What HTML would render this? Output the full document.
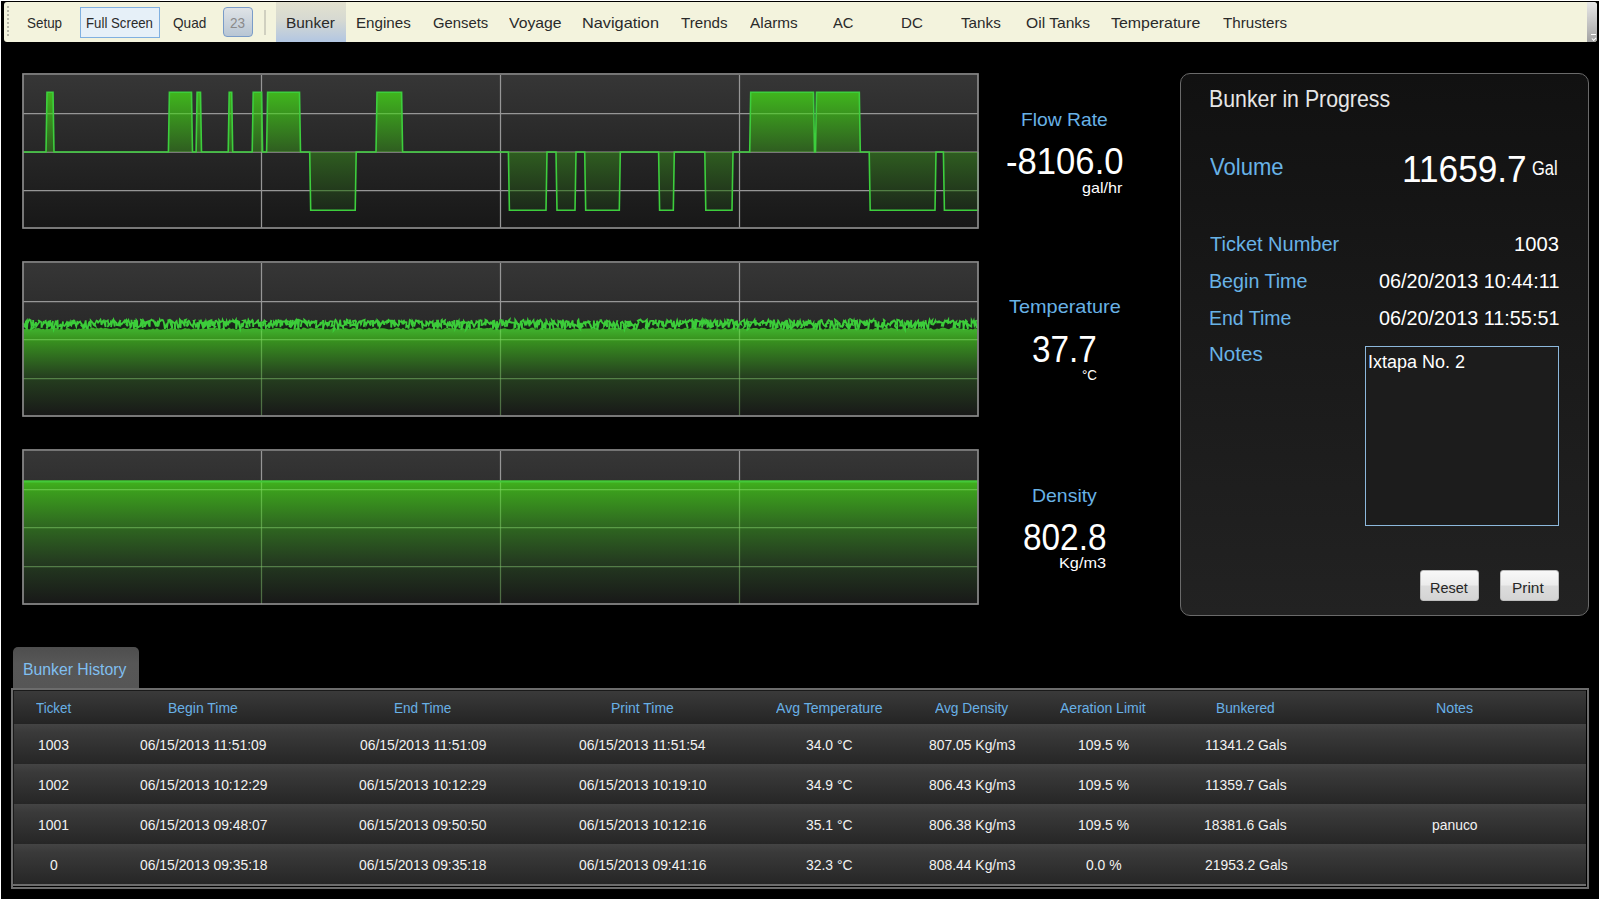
<!DOCTYPE html>
<html><head><meta charset="utf-8"><style>
*{margin:0;padding:0;box-sizing:border-box}
html,body{width:1600px;height:900px;overflow:hidden;background:#000;font-family:"Liberation Sans",sans-serif}
.t{position:absolute;white-space:nowrap;line-height:0;transform-origin:0 0}
.abs{position:absolute}
#frame{position:absolute;left:0;top:0;width:1600px;height:900px;border:1px solid #fff;border-right-color:#fff}
#tb{position:absolute;left:4px;top:2px;width:1593px;height:40px;background:#f3f3dd;border-radius:3px}
#grip{position:absolute;left:3px;top:4px;width:2px;height:30px;background:repeating-linear-gradient(#b8b8a8 0 2px,transparent 2px 4px)}
#tbend{position:absolute;left:1587px;top:2px;width:10px;height:40px;background:linear-gradient(#e8e8e8,#b8b8b8 70%,#a0a0a0);border-radius:0 4px 4px 0}
#fs{position:absolute;left:80px;top:7px;width:80px;height:31px;background:#e6f0f8;border:1px solid #80b0e0}
#n23{position:absolute;left:223px;top:7px;width:30px;height:30px;background:linear-gradient(#dfe3e6,#b8c6d4);border:1px solid #7a9cc8;border-radius:4px}
#sep{position:absolute;left:264px;top:10px;width:2px;height:25px;background:#d0d0c0}
#bunk{position:absolute;left:276px;top:2px;width:70px;height:40px;background:linear-gradient(#e2e1cf 0%,#d6d9d2 45%,#b2c6e2 100%)}
#panel{position:absolute;left:1179.5px;top:73px;width:409px;height:543px;border:1.7px solid #6a6a6a;border-radius:10px;background:linear-gradient(#111,#222)}
#notes{position:absolute;left:1365px;top:346px;width:194px;height:180px;border:1px solid #8cb8dc;background:#1c1c1c}
.btn{position:absolute;top:570px;width:58.5px;height:31px;background:linear-gradient(#f8f8f8,#ececec 48%,#dcdcdc 52%,#d4d4d4);border-radius:3px;border:1px solid #bdbdbd}
#tab{position:absolute;left:13px;top:647px;width:126px;height:42px;background:linear-gradient(#4e4e4e,#575757 40%,#565656);border-radius:5px 5px 0 0}
#tbl{position:absolute;left:11px;top:688px;width:1578px;height:201px;border:2px solid #6c6c6c;background:#000}
#tbli{position:absolute;left:13px;top:690px;width:1573px;height:196px;background:#1a1a1a}
#hdr{position:absolute;left:14px;top:691px;width:1572px;height:33px;background:linear-gradient(#3a3a3a,#242424)}
#tblb{position:absolute;left:13px;top:884px;width:1573px;height:2px;background:#6c6c6c}
.row{position:absolute;left:14px;width:1572px;height:40px;background:linear-gradient(#444 0,#3a3a3a 8px,#262626 100%)}
</style></head><body>
<div id="tb"><div id="grip"></div></div>
<div id="tbend"><div style="position:absolute;left:4px;top:32px;width:5px;height:1px;background:#fff"></div><div style="position:absolute;left:5px;top:35px;width:4px;height:3px;border-left:1.5px solid #fff;border-bottom:1.5px solid #fff;transform:rotate(-45deg)"></div></div>
<div id="fs"></div>
<div id="n23"></div>
<div id="sep"></div>
<div id="bunk"></div>
<svg width="1600" height="900" style="position:absolute;left:0;top:0">
<defs>
<linearGradient id="bg" x1="0" y1="0" x2="0" y2="1"><stop offset="0" stop-color="#363636"/><stop offset="1" stop-color="#171717"/></linearGradient>
<linearGradient id="f1" gradientUnits="userSpaceOnUse" x1="0" y1="92" x2="0" y2="228"><stop offset="0" stop-color="#42cc1a"/><stop offset="0.44" stop-color="#30661f"/><stop offset="0.87" stop-color="#1c2a1a"/><stop offset="1" stop-color="#181a18"/></linearGradient>
<linearGradient id="f2" gradientUnits="userSpaceOnUse" x1="0" y1="319" x2="0" y2="416"><stop offset="0" stop-color="#46d034"/><stop offset="0.12" stop-color="#42c22c"/><stop offset="0.2" stop-color="#3ca81e"/><stop offset="0.6" stop-color="#26441f"/><stop offset="1" stop-color="#181818"/></linearGradient>
<linearGradient id="f3" gradientUnits="userSpaceOnUse" x1="0" y1="481" x2="0" y2="604"><stop offset="0" stop-color="#44c81a"/><stop offset="0.065" stop-color="#3eb41a"/><stop offset="0.37" stop-color="#30721f"/><stop offset="0.68" stop-color="#243c20"/><stop offset="1" stop-color="#181818"/></linearGradient>
</defs>
<rect x="23" y="75" width="955" height="154" fill="url(#bg)"/><rect x="23" y="263" width="955" height="154" fill="url(#bg)"/><rect x="23" y="451" width="955" height="154" fill="url(#bg)"/><g stroke="#969696" stroke-width="1.25"><line x1="23" y1="113.5" x2="978" y2="113.5"/><line x1="23" y1="152.0" x2="978" y2="152.0"/><line x1="23" y1="190.5" x2="978" y2="190.5"/><line x1="261.5" y1="75" x2="261.5" y2="228"/><line x1="500.5" y1="75" x2="500.5" y2="228"/><line x1="739.5" y1="75" x2="739.5" y2="228"/><line x1="23" y1="301.5" x2="978" y2="301.5"/><line x1="23" y1="339.5" x2="978" y2="339.5"/><line x1="23" y1="378.5" x2="978" y2="378.5"/><line x1="261.5" y1="263" x2="261.5" y2="416"/><line x1="500.5" y1="263" x2="500.5" y2="416"/><line x1="739.5" y1="263" x2="739.5" y2="416"/><line x1="23" y1="489.5" x2="978" y2="489.5"/><line x1="23" y1="527.5" x2="978" y2="527.5"/><line x1="23" y1="566.5" x2="978" y2="566.5"/><line x1="261.5" y1="451" x2="261.5" y2="604"/><line x1="500.5" y1="451" x2="500.5" y2="604"/><line x1="739.5" y1="451" x2="739.5" y2="604"/></g><g fill-opacity="0.86"><path d="M23.0,152.0 L46.0,152.0 L47.0,92.3 L53.0,92.3 L54.0,152.0 L168.4,152.0 L169.4,92.3 L191.5,92.3 L192.5,152.0 L196.1,152.0 L197.1,92.3 L200.5,92.3 L201.5,152.0 L228.2,152.0 L229.2,92.3 L231.7,92.3 L232.7,152.0 L252.2,152.0 L253.2,92.3 L261.6,92.3 L262.6,152.0 L266.6,152.0 L267.6,92.3 L299.5,92.3 L300.5,152.0 L309.7,152.0 L310.7,210.3 L355.2,210.3 L356.2,152.0 L376.0,152.0 L377.0,92.3 L401.6,92.3 L402.6,152.0 L508.4,152.0 L509.4,210.3 L546.0,210.3 L547.0,152.0 L556.0,152.0 L557.0,210.3 L575.0,210.3 L576.0,152.0 L584.7,152.0 L585.7,210.3 L619.3,210.3 L620.3,152.0 L658.6,152.0 L659.6,210.3 L673.3,210.3 L674.3,152.0 L704.8,152.0 L705.8,210.3 L732.0,210.3 L733.0,152.0 L749.7,152.0 L750.7,92.3 L813.5,92.3 L814.5,152.0 L815.5,152.0 L816.5,92.3 L859.3,92.3 L860.3,152.0 L869.2,152.0 L870.2,210.3 L935.0,210.3 L936.0,152.0 L943.4,152.0 L944.4,210.3 L978.0,210.3 L978.0,152.0 L978.0,152.0 Z" fill="url(#f1)"/><rect x="23" y="321.5" width="955" height="9" fill="#0c200c" fill-opacity="0.5"/><path d="M23.0,328.7 L25.0,329.2 L27.0,328.3 L29.0,329.5 L31.0,328.6 L33.0,329.6 L35.0,328.2 L37.0,328.2 L39.0,327.9 L41.0,329.2 L43.0,328.8 L45.0,329.6 L47.0,328.6 L49.0,329.2 L51.0,327.9 L53.0,329.5 L55.0,327.7 L57.0,327.9 L59.0,329.7 L61.0,327.7 L63.0,329.6 L65.0,329.7 L67.0,327.6 L69.0,328.4 L71.0,329.2 L73.0,329.6 L75.0,328.7 L77.0,329.5 L79.0,328.4 L81.0,329.1 L83.0,327.7 L85.0,328.9 L87.0,328.0 L89.0,329.1 L91.0,328.1 L93.0,327.6 L95.0,328.5 L97.0,328.0 L99.0,328.6 L101.0,327.5 L103.0,328.5 L105.0,328.0 L107.0,328.3 L109.0,328.8 L111.0,329.1 L113.0,328.6 L115.0,328.4 L117.0,328.1 L119.0,328.8 L121.0,329.1 L123.0,328.0 L125.0,327.8 L127.0,329.0 L129.0,328.1 L131.0,329.2 L133.0,328.7 L135.0,327.7 L137.0,328.3 L139.0,329.6 L141.0,329.3 L143.0,328.9 L145.0,329.7 L147.0,329.7 L149.0,329.2 L151.0,329.4 L153.0,328.6 L155.0,329.5 L157.0,328.1 L159.0,329.6 L161.0,329.7 L163.0,329.3 L165.0,329.6 L167.0,329.0 L169.0,329.0 L171.0,327.7 L173.0,329.1 L175.0,327.7 L177.0,329.5 L179.0,329.3 L181.0,329.4 L183.0,329.1 L185.0,328.1 L187.0,328.8 L189.0,328.6 L191.0,329.4 L193.0,328.8 L195.0,328.4 L197.0,329.1 L199.0,329.2 L201.0,328.9 L203.0,328.3 L205.0,329.0 L207.0,328.8 L209.0,327.7 L211.0,328.1 L213.0,327.8 L215.0,328.6 L217.0,327.7 L219.0,329.2 L221.0,328.8 L223.0,327.8 L225.0,329.0 L227.0,329.2 L229.0,327.6 L231.0,329.1 L233.0,328.5 L235.0,329.5 L237.0,329.5 L239.0,328.9 L241.0,329.3 L243.0,327.9 L245.0,329.1 L247.0,329.0 L249.0,329.1 L251.0,328.5 L253.0,328.0 L255.0,328.3 L257.0,327.9 L259.0,329.0 L261.0,329.0 L263.0,328.9 L265.0,329.2 L267.0,328.1 L269.0,328.8 L271.0,329.3 L273.0,328.9 L275.0,327.9 L277.0,328.1 L279.0,328.2 L281.0,328.2 L283.0,329.0 L285.0,328.3 L287.0,328.0 L289.0,329.6 L291.0,328.8 L293.0,329.5 L295.0,328.4 L297.0,327.8 L299.0,327.7 L301.0,329.5 L303.0,327.6 L305.0,327.7 L307.0,328.8 L309.0,328.4 L311.0,327.6 L313.0,328.2 L315.0,328.8 L317.0,327.9 L319.0,328.3 L321.0,328.0 L323.0,328.6 L325.0,329.5 L327.0,328.8 L329.0,329.2 L331.0,329.3 L333.0,327.5 L335.0,327.7 L337.0,329.3 L339.0,328.6 L341.0,328.4 L343.0,329.4 L345.0,328.1 L347.0,328.6 L349.0,329.3 L351.0,329.1 L353.0,327.6 L355.0,328.1 L357.0,329.4 L359.0,328.8 L361.0,328.4 L363.0,329.5 L365.0,328.7 L367.0,329.4 L369.0,328.1 L371.0,328.9 L373.0,328.3 L375.0,327.5 L377.0,328.9 L379.0,328.6 L381.0,328.2 L383.0,328.2 L385.0,328.4 L387.0,328.9 L389.0,329.6 L391.0,329.1 L393.0,329.6 L395.0,328.2 L397.0,327.6 L399.0,327.8 L401.0,329.3 L403.0,327.7 L405.0,329.2 L407.0,329.7 L409.0,329.2 L411.0,328.6 L413.0,327.9 L415.0,329.3 L417.0,327.9 L419.0,327.5 L421.0,328.6 L423.0,329.5 L425.0,329.7 L427.0,328.6 L429.0,327.6 L431.0,328.5 L433.0,328.5 L435.0,328.9 L437.0,328.3 L439.0,328.4 L441.0,329.4 L443.0,329.3 L445.0,328.1 L447.0,328.7 L449.0,327.6 L451.0,328.6 L453.0,327.5 L455.0,328.9 L457.0,328.4 L459.0,329.6 L461.0,328.6 L463.0,327.9 L465.0,329.2 L467.0,328.4 L469.0,328.7 L471.0,329.1 L473.0,328.4 L475.0,328.7 L477.0,327.6 L479.0,328.2 L481.0,327.7 L483.0,328.6 L485.0,328.6 L487.0,328.0 L489.0,328.3 L491.0,327.5 L493.0,329.6 L495.0,329.4 L497.0,328.2 L499.0,329.7 L501.0,329.1 L503.0,328.6 L505.0,328.2 L507.0,329.0 L509.0,329.3 L511.0,329.2 L513.0,328.5 L515.0,329.4 L517.0,328.0 L519.0,329.2 L521.0,329.7 L523.0,327.6 L525.0,327.9 L527.0,329.0 L529.0,329.0 L531.0,327.8 L533.0,327.5 L535.0,329.5 L537.0,329.7 L539.0,329.5 L541.0,327.6 L543.0,329.1 L545.0,328.5 L547.0,328.3 L549.0,328.2 L551.0,329.1 L553.0,328.4 L555.0,327.9 L557.0,327.6 L559.0,327.6 L561.0,328.4 L563.0,329.1 L565.0,328.8 L567.0,329.6 L569.0,329.4 L571.0,329.5 L573.0,328.7 L575.0,328.6 L577.0,329.0 L579.0,328.9 L581.0,327.9 L583.0,328.7 L585.0,328.5 L587.0,328.6 L589.0,328.6 L591.0,328.6 L593.0,328.8 L595.0,328.2 L597.0,327.8 L599.0,329.7 L601.0,329.2 L603.0,328.1 L605.0,329.3 L607.0,329.2 L609.0,328.2 L611.0,328.1 L613.0,327.9 L615.0,327.5 L617.0,328.0 L619.0,329.5 L621.0,329.6 L623.0,328.9 L625.0,329.6 L627.0,327.6 L629.0,328.7 L631.0,329.6 L633.0,328.1 L635.0,327.6 L637.0,329.6 L639.0,328.8 L641.0,329.6 L643.0,327.7 L645.0,329.3 L647.0,328.8 L649.0,329.4 L651.0,328.2 L653.0,327.6 L655.0,328.9 L657.0,328.3 L659.0,327.8 L661.0,327.8 L663.0,327.7 L665.0,328.8 L667.0,329.2 L669.0,327.7 L671.0,327.9 L673.0,329.3 L675.0,328.0 L677.0,328.8 L679.0,327.9 L681.0,329.3 L683.0,328.8 L685.0,327.7 L687.0,328.2 L689.0,329.0 L691.0,328.0 L693.0,327.8 L695.0,328.4 L697.0,327.5 L699.0,327.6 L701.0,327.8 L703.0,328.2 L705.0,329.3 L707.0,329.5 L709.0,328.4 L711.0,329.1 L713.0,329.3 L715.0,329.6 L717.0,328.0 L719.0,329.0 L721.0,329.5 L723.0,329.1 L725.0,327.6 L727.0,329.3 L729.0,329.2 L731.0,328.8 L733.0,327.6 L735.0,327.7 L737.0,327.5 L739.0,328.7 L741.0,328.8 L743.0,327.7 L745.0,329.3 L747.0,328.4 L749.0,327.8 L751.0,328.8 L753.0,328.1 L755.0,328.0 L757.0,328.0 L759.0,329.2 L761.0,327.7 L763.0,328.0 L765.0,327.8 L767.0,329.0 L769.0,329.0 L771.0,328.4 L773.0,327.8 L775.0,327.5 L777.0,329.5 L779.0,328.8 L781.0,327.6 L783.0,328.9 L785.0,329.3 L787.0,327.9 L789.0,329.6 L791.0,327.9 L793.0,328.5 L795.0,328.5 L797.0,329.6 L799.0,328.6 L801.0,329.1 L803.0,329.1 L805.0,328.1 L807.0,328.5 L809.0,328.5 L811.0,328.2 L813.0,327.9 L815.0,327.9 L817.0,329.7 L819.0,329.5 L821.0,327.9 L823.0,329.7 L825.0,328.2 L827.0,329.2 L829.0,328.5 L831.0,328.5 L833.0,328.4 L835.0,327.6 L837.0,328.6 L839.0,328.1 L841.0,329.5 L843.0,328.9 L845.0,328.1 L847.0,329.3 L849.0,328.8 L851.0,328.9 L853.0,329.1 L855.0,329.1 L857.0,328.0 L859.0,329.4 L861.0,329.1 L863.0,329.2 L865.0,329.1 L867.0,328.0 L869.0,329.7 L871.0,329.1 L873.0,329.5 L875.0,328.1 L877.0,328.2 L879.0,329.4 L881.0,329.7 L883.0,329.0 L885.0,327.8 L887.0,328.1 L889.0,328.7 L891.0,327.5 L893.0,328.2 L895.0,328.7 L897.0,329.5 L899.0,329.0 L901.0,329.5 L903.0,328.0 L905.0,329.4 L907.0,328.0 L909.0,328.1 L911.0,328.9 L913.0,328.0 L915.0,327.5 L917.0,329.0 L919.0,327.6 L921.0,328.9 L923.0,327.7 L925.0,328.6 L927.0,329.5 L929.0,328.4 L931.0,327.9 L933.0,329.5 L935.0,329.5 L937.0,328.5 L939.0,329.1 L941.0,328.0 L943.0,327.5 L945.0,328.0 L947.0,328.8 L949.0,329.2 L951.0,327.8 L953.0,327.8 L955.0,328.2 L957.0,328.1 L959.0,328.3 L961.0,329.1 L963.0,328.3 L965.0,329.1 L967.0,328.9 L969.0,329.5 L971.0,328.8 L973.0,329.6 L975.0,328.3 L977.0,328.7 L978,417 L23,417 Z" fill="url(#f2)"/><rect x="23" y="480.5" width="955" height="122.5" fill="url(#f3)"/></g><clipPath id="fc"><path d="M23.0,152.0 L46.0,152.0 L47.0,92.3 L53.0,92.3 L54.0,152.0 L168.4,152.0 L169.4,92.3 L191.5,92.3 L192.5,152.0 L196.1,152.0 L197.1,92.3 L200.5,92.3 L201.5,152.0 L228.2,152.0 L229.2,92.3 L231.7,92.3 L232.7,152.0 L252.2,152.0 L253.2,92.3 L261.6,92.3 L262.6,152.0 L266.6,152.0 L267.6,92.3 L299.5,92.3 L300.5,152.0 L309.7,152.0 L310.7,210.3 L355.2,210.3 L356.2,152.0 L376.0,152.0 L377.0,92.3 L401.6,92.3 L402.6,152.0 L508.4,152.0 L509.4,210.3 L546.0,210.3 L547.0,152.0 L556.0,152.0 L557.0,210.3 L575.0,210.3 L576.0,152.0 L584.7,152.0 L585.7,210.3 L619.3,210.3 L620.3,152.0 L658.6,152.0 L659.6,210.3 L673.3,210.3 L674.3,152.0 L704.8,152.0 L705.8,210.3 L732.0,210.3 L733.0,152.0 L749.7,152.0 L750.7,92.3 L813.5,92.3 L814.5,152.0 L815.5,152.0 L816.5,92.3 L859.3,92.3 L860.3,152.0 L869.2,152.0 L870.2,210.3 L935.0,210.3 L936.0,152.0 L943.4,152.0 L944.4,210.3 L978.0,210.3 L978.0,152.0 L978.0,152.0 Z"/><path d="M23.0,328.7 L25.0,329.2 L27.0,328.3 L29.0,329.5 L31.0,328.6 L33.0,329.6 L35.0,328.2 L37.0,328.2 L39.0,327.9 L41.0,329.2 L43.0,328.8 L45.0,329.6 L47.0,328.6 L49.0,329.2 L51.0,327.9 L53.0,329.5 L55.0,327.7 L57.0,327.9 L59.0,329.7 L61.0,327.7 L63.0,329.6 L65.0,329.7 L67.0,327.6 L69.0,328.4 L71.0,329.2 L73.0,329.6 L75.0,328.7 L77.0,329.5 L79.0,328.4 L81.0,329.1 L83.0,327.7 L85.0,328.9 L87.0,328.0 L89.0,329.1 L91.0,328.1 L93.0,327.6 L95.0,328.5 L97.0,328.0 L99.0,328.6 L101.0,327.5 L103.0,328.5 L105.0,328.0 L107.0,328.3 L109.0,328.8 L111.0,329.1 L113.0,328.6 L115.0,328.4 L117.0,328.1 L119.0,328.8 L121.0,329.1 L123.0,328.0 L125.0,327.8 L127.0,329.0 L129.0,328.1 L131.0,329.2 L133.0,328.7 L135.0,327.7 L137.0,328.3 L139.0,329.6 L141.0,329.3 L143.0,328.9 L145.0,329.7 L147.0,329.7 L149.0,329.2 L151.0,329.4 L153.0,328.6 L155.0,329.5 L157.0,328.1 L159.0,329.6 L161.0,329.7 L163.0,329.3 L165.0,329.6 L167.0,329.0 L169.0,329.0 L171.0,327.7 L173.0,329.1 L175.0,327.7 L177.0,329.5 L179.0,329.3 L181.0,329.4 L183.0,329.1 L185.0,328.1 L187.0,328.8 L189.0,328.6 L191.0,329.4 L193.0,328.8 L195.0,328.4 L197.0,329.1 L199.0,329.2 L201.0,328.9 L203.0,328.3 L205.0,329.0 L207.0,328.8 L209.0,327.7 L211.0,328.1 L213.0,327.8 L215.0,328.6 L217.0,327.7 L219.0,329.2 L221.0,328.8 L223.0,327.8 L225.0,329.0 L227.0,329.2 L229.0,327.6 L231.0,329.1 L233.0,328.5 L235.0,329.5 L237.0,329.5 L239.0,328.9 L241.0,329.3 L243.0,327.9 L245.0,329.1 L247.0,329.0 L249.0,329.1 L251.0,328.5 L253.0,328.0 L255.0,328.3 L257.0,327.9 L259.0,329.0 L261.0,329.0 L263.0,328.9 L265.0,329.2 L267.0,328.1 L269.0,328.8 L271.0,329.3 L273.0,328.9 L275.0,327.9 L277.0,328.1 L279.0,328.2 L281.0,328.2 L283.0,329.0 L285.0,328.3 L287.0,328.0 L289.0,329.6 L291.0,328.8 L293.0,329.5 L295.0,328.4 L297.0,327.8 L299.0,327.7 L301.0,329.5 L303.0,327.6 L305.0,327.7 L307.0,328.8 L309.0,328.4 L311.0,327.6 L313.0,328.2 L315.0,328.8 L317.0,327.9 L319.0,328.3 L321.0,328.0 L323.0,328.6 L325.0,329.5 L327.0,328.8 L329.0,329.2 L331.0,329.3 L333.0,327.5 L335.0,327.7 L337.0,329.3 L339.0,328.6 L341.0,328.4 L343.0,329.4 L345.0,328.1 L347.0,328.6 L349.0,329.3 L351.0,329.1 L353.0,327.6 L355.0,328.1 L357.0,329.4 L359.0,328.8 L361.0,328.4 L363.0,329.5 L365.0,328.7 L367.0,329.4 L369.0,328.1 L371.0,328.9 L373.0,328.3 L375.0,327.5 L377.0,328.9 L379.0,328.6 L381.0,328.2 L383.0,328.2 L385.0,328.4 L387.0,328.9 L389.0,329.6 L391.0,329.1 L393.0,329.6 L395.0,328.2 L397.0,327.6 L399.0,327.8 L401.0,329.3 L403.0,327.7 L405.0,329.2 L407.0,329.7 L409.0,329.2 L411.0,328.6 L413.0,327.9 L415.0,329.3 L417.0,327.9 L419.0,327.5 L421.0,328.6 L423.0,329.5 L425.0,329.7 L427.0,328.6 L429.0,327.6 L431.0,328.5 L433.0,328.5 L435.0,328.9 L437.0,328.3 L439.0,328.4 L441.0,329.4 L443.0,329.3 L445.0,328.1 L447.0,328.7 L449.0,327.6 L451.0,328.6 L453.0,327.5 L455.0,328.9 L457.0,328.4 L459.0,329.6 L461.0,328.6 L463.0,327.9 L465.0,329.2 L467.0,328.4 L469.0,328.7 L471.0,329.1 L473.0,328.4 L475.0,328.7 L477.0,327.6 L479.0,328.2 L481.0,327.7 L483.0,328.6 L485.0,328.6 L487.0,328.0 L489.0,328.3 L491.0,327.5 L493.0,329.6 L495.0,329.4 L497.0,328.2 L499.0,329.7 L501.0,329.1 L503.0,328.6 L505.0,328.2 L507.0,329.0 L509.0,329.3 L511.0,329.2 L513.0,328.5 L515.0,329.4 L517.0,328.0 L519.0,329.2 L521.0,329.7 L523.0,327.6 L525.0,327.9 L527.0,329.0 L529.0,329.0 L531.0,327.8 L533.0,327.5 L535.0,329.5 L537.0,329.7 L539.0,329.5 L541.0,327.6 L543.0,329.1 L545.0,328.5 L547.0,328.3 L549.0,328.2 L551.0,329.1 L553.0,328.4 L555.0,327.9 L557.0,327.6 L559.0,327.6 L561.0,328.4 L563.0,329.1 L565.0,328.8 L567.0,329.6 L569.0,329.4 L571.0,329.5 L573.0,328.7 L575.0,328.6 L577.0,329.0 L579.0,328.9 L581.0,327.9 L583.0,328.7 L585.0,328.5 L587.0,328.6 L589.0,328.6 L591.0,328.6 L593.0,328.8 L595.0,328.2 L597.0,327.8 L599.0,329.7 L601.0,329.2 L603.0,328.1 L605.0,329.3 L607.0,329.2 L609.0,328.2 L611.0,328.1 L613.0,327.9 L615.0,327.5 L617.0,328.0 L619.0,329.5 L621.0,329.6 L623.0,328.9 L625.0,329.6 L627.0,327.6 L629.0,328.7 L631.0,329.6 L633.0,328.1 L635.0,327.6 L637.0,329.6 L639.0,328.8 L641.0,329.6 L643.0,327.7 L645.0,329.3 L647.0,328.8 L649.0,329.4 L651.0,328.2 L653.0,327.6 L655.0,328.9 L657.0,328.3 L659.0,327.8 L661.0,327.8 L663.0,327.7 L665.0,328.8 L667.0,329.2 L669.0,327.7 L671.0,327.9 L673.0,329.3 L675.0,328.0 L677.0,328.8 L679.0,327.9 L681.0,329.3 L683.0,328.8 L685.0,327.7 L687.0,328.2 L689.0,329.0 L691.0,328.0 L693.0,327.8 L695.0,328.4 L697.0,327.5 L699.0,327.6 L701.0,327.8 L703.0,328.2 L705.0,329.3 L707.0,329.5 L709.0,328.4 L711.0,329.1 L713.0,329.3 L715.0,329.6 L717.0,328.0 L719.0,329.0 L721.0,329.5 L723.0,329.1 L725.0,327.6 L727.0,329.3 L729.0,329.2 L731.0,328.8 L733.0,327.6 L735.0,327.7 L737.0,327.5 L739.0,328.7 L741.0,328.8 L743.0,327.7 L745.0,329.3 L747.0,328.4 L749.0,327.8 L751.0,328.8 L753.0,328.1 L755.0,328.0 L757.0,328.0 L759.0,329.2 L761.0,327.7 L763.0,328.0 L765.0,327.8 L767.0,329.0 L769.0,329.0 L771.0,328.4 L773.0,327.8 L775.0,327.5 L777.0,329.5 L779.0,328.8 L781.0,327.6 L783.0,328.9 L785.0,329.3 L787.0,327.9 L789.0,329.6 L791.0,327.9 L793.0,328.5 L795.0,328.5 L797.0,329.6 L799.0,328.6 L801.0,329.1 L803.0,329.1 L805.0,328.1 L807.0,328.5 L809.0,328.5 L811.0,328.2 L813.0,327.9 L815.0,327.9 L817.0,329.7 L819.0,329.5 L821.0,327.9 L823.0,329.7 L825.0,328.2 L827.0,329.2 L829.0,328.5 L831.0,328.5 L833.0,328.4 L835.0,327.6 L837.0,328.6 L839.0,328.1 L841.0,329.5 L843.0,328.9 L845.0,328.1 L847.0,329.3 L849.0,328.8 L851.0,328.9 L853.0,329.1 L855.0,329.1 L857.0,328.0 L859.0,329.4 L861.0,329.1 L863.0,329.2 L865.0,329.1 L867.0,328.0 L869.0,329.7 L871.0,329.1 L873.0,329.5 L875.0,328.1 L877.0,328.2 L879.0,329.4 L881.0,329.7 L883.0,329.0 L885.0,327.8 L887.0,328.1 L889.0,328.7 L891.0,327.5 L893.0,328.2 L895.0,328.7 L897.0,329.5 L899.0,329.0 L901.0,329.5 L903.0,328.0 L905.0,329.4 L907.0,328.0 L909.0,328.1 L911.0,328.9 L913.0,328.0 L915.0,327.5 L917.0,329.0 L919.0,327.6 L921.0,328.9 L923.0,327.7 L925.0,328.6 L927.0,329.5 L929.0,328.4 L931.0,327.9 L933.0,329.5 L935.0,329.5 L937.0,328.5 L939.0,329.1 L941.0,328.0 L943.0,327.5 L945.0,328.0 L947.0,328.8 L949.0,329.2 L951.0,327.8 L953.0,327.8 L955.0,328.2 L957.0,328.1 L959.0,328.3 L961.0,329.1 L963.0,328.3 L965.0,329.1 L967.0,328.9 L969.0,329.5 L971.0,328.8 L973.0,329.6 L975.0,328.3 L977.0,328.7 L978,417 L23,417 Z"/><rect x="23" y="481" width="955" height="122"/></clipPath><g stroke="rgba(150,235,120,0.32)" stroke-width="1.25" clip-path="url(#fc)"><line x1="23" y1="113.5" x2="978" y2="113.5"/><line x1="23" y1="152.0" x2="978" y2="152.0"/><line x1="23" y1="190.5" x2="978" y2="190.5"/><line x1="261.5" y1="75" x2="261.5" y2="228"/><line x1="500.5" y1="75" x2="500.5" y2="228"/><line x1="739.5" y1="75" x2="739.5" y2="228"/><line x1="23" y1="301.5" x2="978" y2="301.5"/><line x1="23" y1="339.5" x2="978" y2="339.5"/><line x1="23" y1="378.5" x2="978" y2="378.5"/><line x1="261.5" y1="263" x2="261.5" y2="416"/><line x1="500.5" y1="263" x2="500.5" y2="416"/><line x1="739.5" y1="263" x2="739.5" y2="416"/><line x1="23" y1="489.5" x2="978" y2="489.5"/><line x1="23" y1="527.5" x2="978" y2="527.5"/><line x1="23" y1="566.5" x2="978" y2="566.5"/><line x1="261.5" y1="451" x2="261.5" y2="604"/><line x1="500.5" y1="451" x2="500.5" y2="604"/><line x1="739.5" y1="451" x2="739.5" y2="604"/></g><path d="M23.0,152.0 L46.0,152.0 L47.0,92.3 L53.0,92.3 L54.0,152.0 L168.4,152.0 L169.4,92.3 L191.5,92.3 L192.5,152.0 L196.1,152.0 L197.1,92.3 L200.5,92.3 L201.5,152.0 L228.2,152.0 L229.2,92.3 L231.7,92.3 L232.7,152.0 L252.2,152.0 L253.2,92.3 L261.6,92.3 L262.6,152.0 L266.6,152.0 L267.6,92.3 L299.5,92.3 L300.5,152.0 L309.7,152.0 L310.7,210.3 L355.2,210.3 L356.2,152.0 L376.0,152.0 L377.0,92.3 L401.6,92.3 L402.6,152.0 L508.4,152.0 L509.4,210.3 L546.0,210.3 L547.0,152.0 L556.0,152.0 L557.0,210.3 L575.0,210.3 L576.0,152.0 L584.7,152.0 L585.7,210.3 L619.3,210.3 L620.3,152.0 L658.6,152.0 L659.6,210.3 L673.3,210.3 L674.3,152.0 L704.8,152.0 L705.8,210.3 L732.0,210.3 L733.0,152.0 L749.7,152.0 L750.7,92.3 L813.5,92.3 L814.5,152.0 L815.5,152.0 L816.5,92.3 L859.3,92.3 L860.3,152.0 L869.2,152.0 L870.2,210.3 L935.0,210.3 L936.0,152.0 L943.4,152.0 L944.4,210.3 L978.0,210.3 L978.0,152.0 L978.0,152.0" fill="none" stroke="#3dce3d" stroke-width="1.6" stroke-linejoin="miter"/><path d="M23.3,326.2 L24.9,326.7 L23.3,322.9 L25.6,326.9 L25.9,321.5 L26.9,320.4 L26.9,329.2 L27.4,323.6 L29.3,319.6 L30.7,320.4 L31.8,327.5 L32.4,322.0 L31.2,328.9 L34.0,327.5 L33.1,320.1 L33.1,321.7 L33.7,324.4 L35.3,324.9 L36.0,322.1 L36.1,326.6 L38.6,323.1 L39.5,321.6 L38.2,320.2 L41.4,322.2 L42.1,327.7 L41.4,322.3 L41.5,326.2 L44.2,322.9 L42.9,321.7 L45.8,322.8 L45.6,320.7 L45.4,320.1 L47.5,327.1 L46.6,328.4 L48.3,321.7 L50.1,321.1 L48.8,326.6 L50.7,323.5 L52.1,328.7 L53.0,321.1 L52.1,324.2 L53.6,329.5 L55.7,321.3 L55.8,320.6 L55.7,320.9 L58.0,328.7 L57.5,319.9 L57.7,326.5 L58.6,326.1 L60.3,326.0 L60.1,324.1 L61.2,325.8 L61.5,328.8 L63.0,321.5 L62.9,324.9 L65.1,326.2 L64.6,326.0 L66.6,322.6 L67.5,326.9 L68.4,321.5 L67.1,326.7 L68.7,325.9 L70.1,322.3 L70.5,324.7 L71.3,325.5 L72.3,320.2 L72.3,323.9 L73.7,323.2 L73.9,319.8 L73.8,320.2 L74.7,321.2 L75.9,325.4 L76.3,326.5 L77.5,321.0 L77.5,324.5 L78.0,323.4 L80.1,321.6 L81.9,324.7 L82.3,324.5 L81.3,325.3 L84.2,328.6 L83.4,326.5 L83.5,325.5 L84.3,326.6 L85.7,320.4 L86.2,327.8 L88.7,328.6 L87.6,328.2 L88.8,323.0 L89.7,321.3 L89.5,324.8 L90.7,326.3 L90.7,320.6 L93.9,324.0 L92.9,323.1 L93.7,324.9 L95.4,326.0 L94.8,324.2 L96.6,320.6 L97.3,320.9 L98.6,323.1 L98.1,322.8 L100.5,319.7 L101.0,321.6 L101.5,324.9 L102.8,321.0 L103.4,320.6 L104.1,322.5 L104.5,320.6 L105.5,327.0 L105.4,321.3 L105.8,321.7 L107.8,320.4 L108.6,325.7 L107.3,326.9 L110.5,323.2 L110.9,321.9 L111.9,323.5 L111.0,327.0 L112.5,320.2 L113.3,320.0 L113.4,319.8 L114.7,326.5 L114.3,320.7 L116.3,322.9 L116.4,322.0 L116.6,325.0 L119.3,325.5 L118.4,324.0 L120.4,320.1 L119.8,322.2 L120.4,325.6 L120.9,323.4 L121.8,324.0 L124.5,320.7 L125.0,322.1 L123.8,322.9 L126.2,320.0 L127.7,326.3 L126.3,324.4 L127.3,321.7 L128.4,320.1 L130.4,326.2 L130.1,328.3 L131.2,326.0 L131.5,319.7 L131.7,322.7 L133.2,323.0 L133.9,328.7 L134.6,319.9 L134.6,320.9 L136.0,327.0 L136.4,320.2 L137.2,321.3 L137.3,327.8 L140.4,325.7 L139.9,326.9 L141.2,322.0 L142.1,320.3 L141.0,319.9 L142.7,327.8 L143.3,320.6 L145.1,323.7 L144.6,326.8 L146.4,323.0 L145.5,322.3 L147.3,321.5 L149.5,320.8 L147.9,322.7 L149.7,326.7 L149.8,321.0 L150.1,321.0 L151.5,319.7 L154.0,321.4 L153.2,319.9 L153.8,321.5 L156.1,326.4 L155.0,321.5 L156.5,324.5 L157.6,326.7 L157.5,322.5 L158.0,320.7 L158.4,326.3 L159.8,319.9 L160.3,321.1 L162.0,319.8 L163.0,320.3 L162.7,319.9 L163.8,322.2 L164.9,328.8 L166.2,324.8 L167.1,326.8 L167.6,324.1 L168.6,320.1 L167.4,320.5 L169.7,319.8 L170.7,323.1 L169.6,320.9 L172.4,328.6 L171.6,320.9 L172.6,321.6 L174.6,323.4 L174.6,322.1 L175.1,329.3 L175.0,322.8 L176.6,321.1 L178.2,328.4 L179.5,323.4 L179.8,319.8 L181.0,321.6 L180.5,327.9 L180.5,320.3 L182.2,322.2 L182.1,320.5 L184.8,326.4 L184.6,320.1 L185.9,319.7 L184.9,322.1 L187.5,322.4 L186.8,326.5 L188.3,324.5 L187.5,321.7 L188.7,320.7 L189.0,320.9 L190.9,324.6 L193.0,326.7 L193.0,325.1 L194.0,321.7 L194.5,320.6 L193.7,320.8 L195.7,325.9 L195.7,327.5 L197.6,322.2 L198.2,329.6 L199.0,326.0 L199.5,321.4 L201.0,323.0 L200.9,319.6 L201.2,321.9 L203.3,328.6 L202.7,322.0 L203.9,324.5 L205.5,320.7 L204.6,326.6 L205.1,326.1 L206.0,321.6 L208.4,329.0 L208.0,321.5 L210.1,320.6 L210.0,327.2 L209.3,321.6 L211.5,320.3 L212.2,325.8 L213.3,321.3 L214.4,327.6 L215.2,326.7 L214.3,326.4 L215.7,320.3 L215.6,320.1 L217.6,322.3 L218.6,326.2 L219.3,329.8 L219.8,326.9 L219.2,320.3 L220.7,322.0 L222.4,321.0 L222.6,320.0 L223.5,322.0 L224.0,329.8 L223.6,325.9 L225.0,321.3 L225.9,326.7 L226.7,321.3 L228.3,325.3 L228.0,322.6 L229.3,321.1 L229.3,323.3 L230.2,321.3 L232.8,321.0 L233.4,320.8 L233.8,322.3 L233.4,320.5 L234.4,321.4 L234.1,323.0 L235.9,319.9 L236.2,328.9 L237.5,321.0 L239.0,321.7 L240.0,325.5 L238.5,322.3 L240.3,329.4 L242.3,323.1 L242.7,327.0 L243.5,323.0 L244.8,321.1 L243.7,320.6 L245.4,320.2 L245.6,320.9 L247.5,327.2 L246.0,326.8 L248.3,320.4 L249.8,326.6 L248.7,320.5 L250.9,322.3 L250.1,323.0 L252.3,320.0 L252.9,320.9 L253.2,326.9 L253.3,324.1 L254.9,323.5 L255.5,323.0 L257.0,321.4 L257.3,323.2 L257.8,320.9 L258.1,320.6 L259.1,326.7 L259.7,322.1 L261.9,330.0 L261.0,322.9 L261.2,322.2 L263.1,322.8 L263.2,326.3 L263.6,321.3 L265.4,321.2 L264.9,320.8 L265.8,327.4 L266.9,326.0 L267.6,325.5 L268.7,324.0 L269.1,328.0 L271.5,320.1 L270.1,325.2 L270.7,322.5 L272.7,326.6 L273.7,322.1 L274.5,323.9 L276.2,319.8 L276.2,319.8 L276.4,326.6 L277.8,321.9 L278.9,322.2 L278.1,319.6 L280.2,322.8 L280.2,320.4 L280.4,327.2 L280.7,319.9 L282.3,325.6 L282.4,321.3 L284.5,321.6 L285.8,320.5 L285.5,322.8 L286.4,324.7 L287.7,324.2 L286.7,320.9 L289.5,321.8 L289.6,326.9 L290.7,320.0 L291.1,325.3 L290.3,327.8 L292.6,324.0 L292.8,319.9 L292.6,324.6 L295.5,320.7 L294.4,329.3 L297.0,320.0 L296.5,319.7 L297.7,320.0 L298.3,329.8 L298.9,322.3 L298.7,319.9 L301.8,321.1 L300.7,326.9 L301.8,321.4 L303.8,321.8 L304.6,322.4 L304.3,319.8 L306.1,321.2 L306.8,325.0 L305.9,324.0 L307.2,325.4 L307.0,322.0 L309.3,323.1 L308.5,319.9 L310.1,326.4 L310.1,323.4 L312.0,320.8 L311.3,323.5 L313.9,321.7 L314.4,322.7 L315.8,320.8 L316.5,321.1 L316.0,326.9 L317.4,325.9 L316.5,327.6 L319.4,324.7 L320.1,324.4 L320.6,322.1 L321.0,323.6 L321.5,322.4 L323.0,323.2 L323.1,320.0 L323.0,329.5 L323.8,325.6 L325.0,323.9 L325.4,321.9 L327.0,325.0 L327.3,322.2 L327.9,326.0 L328.9,323.2 L329.1,323.6 L329.3,322.3 L330.2,321.1 L332.8,321.4 L331.5,326.1 L333.8,325.5 L334.8,328.7 L333.8,330.0 L335.0,320.8 L335.5,319.9 L336.5,321.1 L337.5,324.6 L337.9,329.6 L340.0,321.0 L340.1,319.7 L340.9,325.8 L342.7,326.1 L343.5,329.3 L343.0,325.6 L345.0,324.8 L343.9,320.5 L346.0,323.8 L346.3,324.5 L345.9,324.4 L346.8,319.6 L347.6,320.0 L348.0,323.0 L350.9,322.8 L349.7,319.6 L350.4,326.0 L352.2,324.8 L354.1,325.1 L352.9,321.1 L355.3,320.6 L356.1,321.5 L355.3,325.4 L355.7,324.6 L357.0,329.2 L357.8,323.5 L359.0,321.8 L360.8,323.2 L360.5,321.2 L360.3,321.2 L360.9,324.0 L362.2,320.7 L364.6,319.9 L363.8,326.8 L364.6,322.0 L365.7,322.6 L366.1,324.8 L368.2,320.4 L367.4,322.5 L368.8,321.4 L370.4,324.8 L370.7,324.6 L370.8,321.1 L372.7,320.9 L372.8,323.7 L373.1,323.2 L373.0,326.6 L373.6,321.8 L374.9,323.1 L376.1,320.8 L377.5,322.6 L378.6,326.4 L377.7,320.7 L379.6,322.7 L379.7,326.8 L381.9,322.6 L382.8,322.2 L382.8,320.6 L382.2,322.9 L383.5,321.8 L384.3,324.8 L384.7,322.5 L386.4,321.3 L387.0,322.8 L388.2,320.8 L388.5,322.9 L387.8,320.6 L389.8,320.4 L391.8,323.9 L391.1,320.0 L391.2,327.6 L392.1,320.0 L394.8,326.7 L395.1,324.0 L394.1,319.8 L394.9,325.0 L395.2,322.6 L398.2,325.9 L399.1,324.5 L398.9,319.7 L398.9,320.0 L399.2,320.9 L402.2,322.5 L402.4,324.3 L402.2,321.8 L404.2,324.2 L403.1,321.6 L404.0,320.7 L404.8,321.9 L406.5,322.2 L406.2,326.9 L408.0,325.9 L408.5,328.7 L409.7,320.3 L409.9,319.9 L411.4,321.3 L411.6,324.2 L412.4,325.6 L412.5,321.2 L414.0,323.5 L414.4,323.8 L414.2,326.6 L416.0,319.7 L416.2,321.0 L418.6,320.8 L418.8,323.1 L418.3,322.7 L419.6,321.3 L420.5,321.9 L421.8,321.5 L422.7,328.6 L421.6,321.9 L423.1,324.5 L424.6,325.7 L426.1,325.8 L426.3,321.7 L426.8,322.2 L426.5,321.4 L428.6,324.9 L429.9,321.6 L430.8,322.1 L431.4,322.3 L431.4,322.4 L432.7,321.3 L432.8,326.8 L434.0,323.3 L433.8,329.8 L435.4,322.3 L435.6,325.5 L437.2,326.9 L437.0,321.9 L437.9,323.0 L438.0,319.7 L438.4,327.5 L439.5,324.0 L441.2,326.6 L441.4,320.5 L441.9,320.0 L442.1,322.3 L444.9,320.5 L444.0,324.9 L444.3,320.5 L445.1,323.4 L446.6,325.2 L448.5,322.9 L447.1,328.0 L447.7,323.1 L450.3,326.2 L449.2,321.2 L452.3,327.0 L453.3,324.2 L451.7,321.4 L453.4,322.9 L454.2,322.3 L454.3,320.0 L455.1,328.7 L456.6,325.7 L457.3,320.1 L456.8,321.0 L457.5,324.3 L458.8,321.3 L459.5,328.2 L459.9,322.7 L462.0,322.1 L461.3,329.8 L463.7,321.1 L464.9,323.8 L464.1,321.4 L464.7,322.7 L467.3,322.3 L466.0,329.5 L467.7,327.5 L469.7,322.8 L470.1,329.0 L468.9,321.9 L471.8,323.2 L471.1,320.2 L471.5,320.9 L472.4,322.9 L474.0,326.7 L473.3,326.8 L474.5,326.0 L476.3,322.1 L476.6,320.4 L476.5,322.9 L479.4,321.0 L478.4,325.0 L478.9,329.8 L479.3,320.4 L481.6,320.6 L481.5,325.0 L482.7,324.9 L484.7,322.4 L485.4,325.4 L485.8,323.8 L485.5,319.7 L487.0,320.5 L486.0,322.0 L487.6,322.0 L489.8,323.9 L490.8,321.6 L490.6,322.7 L491.3,323.6 L492.6,321.8 L493.1,320.5 L492.8,328.8 L493.9,325.6 L494.1,320.0 L495.7,326.9 L496.6,330.0 L497.0,321.2 L497.4,325.3 L497.5,328.3 L499.9,321.7 L500.2,320.1 L501.4,320.1 L502.3,326.1 L502.0,322.3 L502.3,325.8 L503.2,321.7 L505.3,326.9 L504.5,324.7 L506.2,320.4 L506.9,326.6 L507.8,321.9 L508.6,320.5 L509.5,319.7 L508.9,322.0 L510.9,322.5 L510.8,322.2 L512.5,322.7 L511.5,322.6 L514.5,322.4 L514.3,327.6 L515.4,327.0 L515.3,320.0 L517.0,322.6 L516.3,322.9 L518.0,324.4 L518.1,323.0 L518.7,329.6 L520.7,322.2 L522.1,323.9 L522.0,328.6 L521.6,321.8 L522.1,320.9 L523.4,319.9 L524.9,324.3 L525.7,322.4 L526.4,325.3 L527.8,320.0 L528.7,323.0 L529.5,326.4 L529.8,320.0 L530.7,324.9 L530.2,322.9 L531.4,323.1 L533.5,320.3 L533.6,321.3 L534.2,321.7 L533.7,321.5 L535.1,327.0 L537.1,320.8 L535.7,323.0 L537.1,326.9 L538.8,321.1 L538.1,320.8 L538.9,325.1 L540.0,320.1 L540.2,319.9 L542.1,322.3 L542.1,329.8 L544.6,322.9 L544.2,328.1 L545.1,322.3 L545.4,329.0 L546.3,320.5 L547.0,321.6 L546.7,322.7 L549.9,325.7 L549.8,329.3 L550.1,322.9 L551.1,324.2 L552.2,322.9 L553.8,329.8 L552.1,320.8 L554.8,324.0 L553.7,320.0 L554.6,323.8 L555.4,323.5 L557.9,326.5 L558.3,324.1 L558.3,321.0 L560.3,322.4 L560.3,320.3 L561.0,323.9 L560.8,321.2 L562.0,328.6 L562.4,321.4 L562.9,319.8 L564.9,329.6 L565.5,321.6 L566.1,321.5 L566.7,321.1 L568.4,324.3 L567.6,325.2 L568.5,321.0 L570.1,327.8 L570.6,325.7 L570.6,322.8 L571.1,324.0 L572.7,320.4 L572.7,326.6 L573.3,324.5 L574.2,326.9 L575.0,324.6 L577.8,326.6 L577.7,321.1 L578.5,319.9 L580.0,328.8 L578.4,327.0 L581.0,324.8 L581.3,328.2 L580.6,322.9 L583.0,327.0 L582.2,324.7 L583.9,322.3 L585.5,324.7 L585.5,321.2 L585.8,323.0 L587.8,321.9 L588.6,322.7 L589.6,321.8 L588.9,321.5 L590.9,326.6 L590.1,324.6 L590.7,325.3 L591.5,328.2 L593.5,327.6 L593.9,320.6 L594.6,328.9 L594.6,325.5 L595.7,324.5 L597.5,322.5 L597.0,320.8 L597.3,330.0 L598.8,322.7 L600.7,320.7 L600.5,320.3 L601.0,320.1 L602.3,322.8 L603.9,324.1 L604.2,322.6 L604.1,326.0 L605.5,324.4 L604.8,323.0 L605.3,320.7 L607.1,327.1 L607.0,320.8 L609.3,321.9 L609.5,321.0 L609.1,329.1 L610.0,322.3 L611.8,326.0 L611.6,323.8 L612.3,326.3 L613.5,322.2 L614.2,323.1 L614.5,329.6 L617.5,320.3 L616.8,322.8 L617.9,325.0 L618.5,326.9 L618.5,328.6 L620.7,329.2 L621.0,325.1 L620.8,322.8 L622.3,321.8 L624.3,325.0 L623.6,325.5 L624.5,329.6 L626.0,325.9 L625.2,320.5 L626.0,327.3 L628.3,324.6 L627.0,321.9 L629.5,321.7 L628.9,326.1 L631.2,325.3 L630.0,321.0 L630.9,323.0 L633.2,325.8 L634.5,324.7 L634.0,329.8 L634.1,325.6 L635.3,324.1 L637.1,325.3 L636.1,329.8 L638.7,322.1 L637.8,320.8 L639.4,319.8 L640.1,320.2 L640.6,319.7 L643.0,322.7 L642.3,321.1 L643.3,321.5 L642.7,322.1 L645.6,321.0 L646.7,320.0 L645.6,327.7 L647.4,328.7 L647.0,320.7 L648.4,326.9 L649.7,322.4 L650.0,321.9 L650.2,321.0 L651.5,320.9 L653.4,320.9 L652.9,325.0 L653.5,324.1 L655.0,322.1 L654.9,323.8 L656.0,319.7 L655.8,322.3 L658.3,326.2 L659.5,320.1 L658.1,323.8 L659.3,322.8 L659.7,321.7 L661.8,321.6 L662.1,325.1 L663.5,326.4 L663.1,321.2 L663.0,324.9 L665.6,325.9 L666.3,322.1 L666.9,322.6 L667.2,320.3 L668.9,322.2 L669.6,321.6 L669.4,322.4 L671.3,319.7 L670.9,321.1 L671.3,322.3 L672.7,327.2 L672.9,326.1 L673.8,320.9 L674.9,328.8 L676.4,324.7 L676.3,325.9 L676.7,322.2 L677.2,320.5 L679.0,326.7 L679.5,322.7 L679.1,326.9 L680.3,320.0 L680.3,324.6 L683.1,323.1 L682.5,320.5 L682.5,320.8 L684.4,323.0 L684.2,322.8 L685.4,320.7 L687.8,328.5 L686.4,322.1 L688.4,321.0 L687.9,322.5 L689.5,320.2 L691.1,320.9 L692.0,319.9 L692.4,323.2 L692.3,328.3 L693.3,320.6 L694.5,328.8 L696.2,319.8 L695.3,319.8 L695.4,329.6 L696.3,323.0 L697.1,320.4 L698.0,321.2 L700.2,321.3 L699.3,326.6 L702.0,320.1 L702.3,322.3 L702.0,327.5 L703.9,320.4 L704.0,320.1 L704.9,322.0 L705.1,323.8 L706.3,322.4 L706.2,319.8 L707.2,320.4 L707.5,327.6 L708.5,322.5 L710.6,328.4 L710.3,319.8 L712.0,326.7 L713.1,326.2 L712.5,323.7 L714.9,320.2 L715.8,323.8 L716.1,325.5 L717.0,320.6 L716.9,322.0 L717.4,320.0 L717.4,326.7 L719.8,325.3 L720.5,320.9 L721.5,321.8 L721.4,321.6 L722.8,328.0 L723.8,322.8 L724.0,324.8 L724.5,323.9 L724.2,326.5 L725.0,321.4 L726.0,324.1 L728.0,320.1 L729.2,320.0 L727.5,319.7 L728.6,327.4 L730.8,319.6 L729.7,322.9 L731.6,319.8 L732.9,320.2 L733.1,324.4 L734.2,321.6 L733.6,329.7 L735.7,321.0 L736.9,325.8 L736.9,322.1 L736.9,320.4 L737.7,327.6 L739.9,322.8 L739.9,323.4 L741.0,324.2 L740.4,322.3 L742.9,320.7 L744.1,319.9 L744.7,324.8 L745.0,326.3 L744.4,326.7 L746.8,321.0 L748.0,329.3 L747.5,329.6 L748.3,321.7 L748.1,321.6 L749.8,326.3 L751.7,322.9 L750.8,322.2 L753.2,322.4 L753.6,321.8 L754.6,320.0 L755.2,324.7 L755.8,320.1 L755.4,325.6 L756.5,323.1 L756.2,322.4 L759.1,324.5 L759.4,325.3 L760.2,325.2 L759.6,323.4 L759.9,323.2 L762.7,321.2 L761.9,321.8 L762.5,323.0 L763.1,320.3 L763.7,323.0 L766.7,322.5 L766.5,322.7 L766.0,325.7 L768.3,320.1 L768.8,321.7 L769.9,322.1 L771.2,321.6 L770.3,327.3 L770.5,321.2 L772.4,322.8 L773.1,322.2 L772.6,329.4 L773.9,319.7 L776.0,328.6 L777.2,322.6 L777.6,328.1 L777.5,322.9 L777.2,325.4 L778.2,320.6 L778.5,320.9 L781.1,326.8 L782.2,321.7 L782.5,323.6 L782.3,324.3 L784.6,322.1 L783.1,329.9 L786.2,322.5 L787.0,319.9 L786.9,326.6 L788.1,324.9 L787.1,321.3 L788.0,329.1 L788.6,325.4 L791.4,329.6 L789.8,320.1 L792.4,322.5 L792.8,326.8 L794.2,325.5 L794.1,319.7 L794.0,324.7 L795.4,324.5 L796.8,326.3 L796.3,324.9 L798.0,320.3 L797.8,326.1 L798.9,324.8 L800.1,320.8 L801.9,326.9 L800.5,328.1 L802.6,325.4 L804.1,322.6 L803.1,320.6 L804.5,325.3 L806.5,320.9 L806.2,325.8 L806.8,322.3 L808.3,322.4 L807.0,325.5 L808.5,320.5 L810.1,322.4 L809.6,324.2 L810.1,320.0 L811.1,323.0 L812.4,324.7 L813.5,322.9 L813.5,329.2 L815.9,323.1 L816.1,325.3 L816.4,329.9 L818.4,321.5 L818.5,322.7 L819.4,320.6 L820.0,330.0 L819.7,325.3 L820.6,320.0 L820.5,320.0 L821.7,320.1 L822.5,323.0 L823.8,325.2 L825.9,326.7 L826.5,326.5 L825.8,324.3 L828.1,323.1 L827.1,322.2 L828.7,320.0 L830.2,321.4 L830.9,321.3 L829.9,328.6 L831.9,322.1 L831.9,320.8 L833.7,328.3 L834.2,328.8 L835.7,322.7 L835.9,325.4 L835.1,319.7 L837.8,321.7 L837.4,329.1 L837.9,323.9 L840.2,322.8 L839.8,323.0 L839.7,324.0 L840.3,326.6 L843.0,325.6 L841.9,327.6 L843.9,320.7 L844.3,321.0 L844.7,321.9 L845.4,320.9 L846.9,324.7 L846.3,325.4 L848.0,327.8 L848.8,320.1 L848.7,320.2 L849.2,328.6 L851.0,324.1 L852.7,324.7 L851.3,319.7 L853.8,321.2 L854.0,320.6 L855.9,329.1 L855.6,329.0 L855.6,320.1 L856.0,321.7 L857.0,320.8 L858.4,329.6 L860.1,322.5 L859.4,325.1 L860.1,320.5 L862.3,322.3 L861.4,321.1 L864.0,324.0 L863.8,321.9 L863.9,323.1 L864.1,320.7 L865.6,325.0 L865.9,325.8 L866.7,320.0 L868.3,325.9 L868.3,329.7 L869.7,320.2 L871.1,321.8 L871.8,320.1 L871.3,322.6 L873.5,319.6 L873.6,320.6 L875.4,321.0 L875.4,326.7 L876.0,323.5 L875.5,320.8 L877.8,328.8 L877.8,329.8 L878.6,321.4 L878.5,325.8 L880.2,326.6 L881.3,326.5 L882.4,322.9 L883.7,323.1 L882.4,328.7 L884.7,320.6 L883.9,320.0 L884.6,325.2 L887.2,328.0 L886.2,326.9 L887.8,323.5 L887.9,323.4 L890.2,325.2 L890.7,322.6 L890.9,322.4 L891.4,322.0 L891.0,323.9 L892.8,322.0 L894.1,320.4 L895.2,321.6 L895.8,323.1 L894.9,326.1 L897.1,329.0 L897.3,327.3 L897.2,319.7 L899.2,320.3 L900.0,322.0 L901.3,325.7 L900.2,325.7 L901.2,321.4 L902.2,320.6 L903.3,326.9 L905.1,329.9 L905.0,323.1 L906.3,324.4 L906.8,322.9 L907.1,320.4 L909.0,327.9 L908.8,322.1 L909.8,323.1 L910.3,326.6 L911.3,320.0 L911.2,327.3 L912.4,326.9 L912.0,325.5 L912.8,326.1 L915.0,322.8 L914.8,328.4 L917.3,321.7 L918.1,320.7 L919.0,326.9 L919.4,323.8 L918.6,322.5 L918.9,326.2 L922.0,322.4 L920.4,322.6 L921.3,326.9 L923.0,322.7 L924.1,328.9 L924.4,322.7 L925.9,322.0 L925.4,320.2 L925.7,322.1 L928.0,329.7 L928.9,322.3 L929.6,319.7 L930.8,322.6 L931.7,321.4 L930.1,322.6 L932.3,320.3 L931.6,324.1 L932.3,324.3 L933.4,324.5 L935.1,321.5 L935.1,322.9 L935.7,321.2 L937.1,321.8 L939.1,321.2 L940.0,322.0 L939.2,322.1 L939.6,321.8 L942.3,322.9 L941.8,325.6 L943.2,325.7 L943.8,322.7 L944.3,321.8 L944.3,322.8 L944.8,321.7 L946.2,320.6 L947.7,321.3 L946.7,323.0 L948.3,319.9 L948.4,322.9 L951.1,321.4 L950.0,323.6 L951.0,322.2 L953.2,320.8 L954.1,322.3 L953.3,327.4 L955.5,327.6 L954.5,323.3 L956.2,321.9 L955.7,324.1 L957.7,323.7 L957.8,325.8 L960.0,321.0 L959.4,328.2 L960.1,321.2 L960.8,321.8 L963.0,321.2 L963.7,329.9 L964.1,320.9 L963.8,326.1 L965.8,320.4 L967.0,321.7 L966.3,323.0 L968.0,328.9 L967.6,323.8 L969.5,325.4 L970.2,326.1 L971.3,326.6 L971.6,320.3 L972.8,322.6 L973.1,322.7 L973.8,320.8 L974.5,325.3 L975.7,322.6 L976.7,328.0 L975.6,321.0 L977.4,320.6 L976.7,320.7" fill="none" stroke="#3ccc3a" stroke-width="1.8"/><line x1="23" y1="481.5" x2="978" y2="481.5" stroke="#44c83a" stroke-width="2"/><rect x="23" y="74" width="955" height="154" fill="none" stroke="#8a8a8a" stroke-width="1.7"/><rect x="23" y="262" width="955" height="154" fill="none" stroke="#8a8a8a" stroke-width="1.7"/><rect x="23" y="450" width="955" height="154" fill="none" stroke="#8a8a8a" stroke-width="1.7"/></svg>
<div id="panel"></div>
<div id="notes"></div>
<div class="btn" style="left:1420px"></div>
<div class="btn" style="left:1500px"></div>
<div id="tab"></div>
<div id="tbl"></div>
<div id="tbli"></div>
<div id="hdr"></div>
<div id="tblb"></div>
<div class="row" style="top:724px"></div><div class="row" style="top:764px"></div><div class="row" style="top:804px"></div><div class="row" style="top:844px"></div>
<div class="t" style="left:27.00px;top:23.18px;font-size:14.5px;color:#2a2a2a;transform:scaleX(0.9252)">Setup</div>
<div class="t" style="left:86.09px;top:23.18px;font-size:14.5px;color:#2a2a2a;transform:scaleX(0.9132)">Full Screen</div>
<div class="t" style="left:173.25px;top:23.18px;font-size:14.5px;color:#2a2a2a;transform:scaleX(0.9391)">Quad</div>
<div class="t" style="left:285.94px;top:23.18px;font-size:14.5px;color:#2a2a2a;transform:scaleX(1.0640)">Bunker</div>
<div class="t" style="left:356.45px;top:23.18px;font-size:14.5px;color:#2a2a2a;transform:scaleX(1.0460)">Engines</div>
<div class="t" style="left:432.50px;top:23.18px;font-size:14.5px;color:#2a2a2a;transform:scaleX(1.0233)">Gensets</div>
<div class="t" style="left:508.75px;top:23.18px;font-size:14.5px;color:#2a2a2a;transform:scaleX(1.0866)">Voyage</div>
<div class="t" style="left:581.88px;top:23.18px;font-size:14.5px;color:#2a2a2a;transform:scaleX(1.1231)">Navigation</div>
<div class="t" style="left:681.25px;top:23.18px;font-size:14.5px;color:#2a2a2a;transform:scaleX(1.0431)">Trends</div>
<div class="t" style="left:749.70px;top:23.18px;font-size:14.5px;color:#2a2a2a;transform:scaleX(1.0587)">Alarms</div>
<div class="t" style="left:832.50px;top:23.18px;font-size:14.5px;color:#2a2a2a;transform:scaleX(1.0167)">AC</div>
<div class="t" style="left:900.71px;top:23.18px;font-size:14.5px;color:#2a2a2a;transform:scaleX(1.0400)">DC</div>
<div class="t" style="left:960.50px;top:23.18px;font-size:14.5px;color:#2a2a2a;transform:scaleX(1.0497)">Tanks</div>
<div class="t" style="left:1025.50px;top:23.18px;font-size:14.5px;color:#2a2a2a;transform:scaleX(1.0778)">Oil Tanks</div>
<div class="t" style="left:1111.25px;top:23.18px;font-size:14.5px;color:#2a2a2a;transform:scaleX(1.0973)">Temperature</div>
<div class="t" style="left:1222.50px;top:23.18px;font-size:14.5px;color:#2a2a2a;transform:scaleX(1.0453)">Thrusters</div>
<div class="t" style="left:230.00px;top:23.18px;font-size:14.5px;color:#8a8a8a;transform:scaleX(0.9338)">23</div>
<div class="t" style="left:1020.89px;top:120.22px;font-size:19.0px;color:#68b2e6;transform:scaleX(1.0136)">Flow Rate</div>
<div class="t" style="left:1006.44px;top:162.13px;font-size:36.0px;color:#ffffff;transform:scaleX(0.9627)">-8106.0</div>
<div class="t" style="left:1081.80px;top:188.00px;font-size:15.0px;color:#ffffff;transform:scaleX(1.0766)">gal/hr</div>
<div class="t" style="left:1008.90px;top:307.42px;font-size:19.0px;color:#68b2e6;transform:scaleX(1.0472)">Temperature</div>
<div class="t" style="left:1032.48px;top:350.03px;font-size:36.0px;color:#ffffff;transform:scaleX(0.9229)">37.7</div>
<div class="t" style="left:1081.80px;top:375.20px;font-size:15.0px;color:#ffffff;transform:scaleX(0.8942)">°C</div>
<div class="t" style="left:1031.68px;top:496.32px;font-size:19.0px;color:#68b2e6;transform:scaleX(1.0230)">Density</div>
<div class="t" style="left:1023.07px;top:537.83px;font-size:36.0px;color:#ffffff;transform:scaleX(0.9266)">802.8</div>
<div class="t" style="left:1058.91px;top:563.00px;font-size:15.0px;color:#ffffff;transform:scaleX(1.0855)">Kg/m3</div>
<div class="t" style="left:1208.91px;top:98.98px;font-size:24.0px;color:#e6e6e6;transform:scaleX(0.8873)">Bunker in Progress</div>
<div class="t" style="left:1209.80px;top:167.38px;font-size:24.0px;color:#68b2e6;transform:scaleX(0.9184)">Volume</div>
<div class="t" style="left:1401.50px;top:169.78px;font-size:37.0px;color:#ffffff;transform:scaleX(0.9520)">11659.7</div>
<div class="t" style="left:1532.17px;top:167.87px;font-size:20.0px;color:#ffffff;transform:scaleX(0.8255)">Gal</div>
<div class="t" style="left:1209.80px;top:244.02px;font-size:21.0px;color:#68b2e6;transform:scaleX(0.9517)">Ticket Number</div>
<div class="t" style="left:1514.04px;top:244.02px;font-size:21.0px;color:#ffffff;transform:scaleX(0.9614)">1003</div>
<div class="t" style="left:1208.86px;top:281.42px;font-size:21.0px;color:#68b2e6;transform:scaleX(0.9369)">Begin Time</div>
<div class="t" style="left:1378.50px;top:281.42px;font-size:21.0px;color:#ffffff;transform:scaleX(0.9441)">06/20/2013 10:44:11</div>
<div class="t" style="left:1208.87px;top:318.12px;font-size:21.0px;color:#68b2e6;transform:scaleX(0.9290)">End Time</div>
<div class="t" style="left:1378.50px;top:318.12px;font-size:21.0px;color:#ffffff;transform:scaleX(0.9441)">06/20/2013 11:55:51</div>
<div class="t" style="left:1208.82px;top:354.42px;font-size:21.0px;color:#68b2e6;transform:scaleX(0.9783)">Notes</div>
<div class="t" style="left:1368.00px;top:362.06px;font-size:18.0px;color:#ffffff;transform:scaleX(0.9995)">Ixtapa No. 2</div>
<div class="t" style="left:1429.54px;top:587.80px;font-size:15.0px;color:#262626;transform:scaleX(0.9611)">Reset</div>
<div class="t" style="left:1512.47px;top:587.80px;font-size:15.0px;color:#262626;transform:scaleX(1.0269)">Print</div>
<div class="t" style="left:23.44px;top:668.78px;font-size:16.5px;color:#80bff0;transform:scaleX(0.9551)">Bunker History</div>
<div class="t" style="left:36.00px;top:707.60px;font-size:15.0px;color:#68b0e6;transform:scaleX(0.8912)">Ticket</div>
<div class="t" style="left:167.82px;top:707.60px;font-size:15.0px;color:#68b0e6;transform:scaleX(0.9295)">Begin Time</div>
<div class="t" style="left:393.80px;top:707.60px;font-size:15.0px;color:#68b0e6;transform:scaleX(0.9038)">End Time</div>
<div class="t" style="left:610.57px;top:707.60px;font-size:15.0px;color:#68b0e6;transform:scaleX(0.9294)">Print Time</div>
<div class="t" style="left:775.60px;top:707.60px;font-size:15.0px;color:#68b0e6;transform:scaleX(0.9383)">Avg Temperature</div>
<div class="t" style="left:934.90px;top:707.60px;font-size:15.0px;color:#68b0e6;transform:scaleX(0.9183)">Avg Density</div>
<div class="t" style="left:1060.10px;top:707.60px;font-size:15.0px;color:#68b0e6;transform:scaleX(0.9347)">Aeration Limit</div>
<div class="t" style="left:1216.19px;top:707.60px;font-size:15.0px;color:#68b0e6;transform:scaleX(0.9146)">Bunkered</div>
<div class="t" style="left:1435.55px;top:707.60px;font-size:15.0px;color:#68b0e6;transform:scaleX(0.9473)">Notes</div>
<div class="t" style="left:38.19px;top:744.50px;font-size:15.0px;color:#f2f2f2;transform:scaleX(0.9263)">1003</div>
<div class="t" style="left:140.06px;top:744.50px;font-size:15.0px;color:#f2f2f2;transform:scaleX(0.9263)">06/15/2013 11:51:09</div>
<div class="t" style="left:359.78px;top:744.50px;font-size:15.0px;color:#f2f2f2;transform:scaleX(0.9263)">06/15/2013 11:51:09</div>
<div class="t" style="left:579.31px;top:744.50px;font-size:15.0px;color:#f2f2f2;transform:scaleX(0.9263)">06/15/2013 11:51:54</div>
<div class="t" style="left:805.58px;top:744.50px;font-size:15.0px;color:#f2f2f2;transform:scaleX(0.9263)">34.0 °C</div>
<div class="t" style="left:928.65px;top:744.50px;font-size:15.0px;color:#f2f2f2;transform:scaleX(0.9263)">807.05 Kg/m3</div>
<div class="t" style="left:1077.55px;top:744.50px;font-size:15.0px;color:#f2f2f2;transform:scaleX(0.9263)">109.5 %</div>
<div class="t" style="left:1204.81px;top:744.50px;font-size:15.0px;color:#f2f2f2;transform:scaleX(0.9263)">11341.2 Gals</div>
<div class="t" style="left:38.19px;top:784.50px;font-size:15.0px;color:#f2f2f2;transform:scaleX(0.9263)">1002</div>
<div class="t" style="left:139.54px;top:784.50px;font-size:15.0px;color:#f2f2f2;transform:scaleX(0.9263)">06/15/2013 10:12:29</div>
<div class="t" style="left:359.26px;top:784.50px;font-size:15.0px;color:#f2f2f2;transform:scaleX(0.9263)">06/15/2013 10:12:29</div>
<div class="t" style="left:578.79px;top:784.50px;font-size:15.0px;color:#f2f2f2;transform:scaleX(0.9263)">06/15/2013 10:19:10</div>
<div class="t" style="left:805.58px;top:784.50px;font-size:15.0px;color:#f2f2f2;transform:scaleX(0.9263)">34.9 °C</div>
<div class="t" style="left:928.65px;top:784.50px;font-size:15.0px;color:#f2f2f2;transform:scaleX(0.9263)">806.43 Kg/m3</div>
<div class="t" style="left:1077.55px;top:784.50px;font-size:15.0px;color:#f2f2f2;transform:scaleX(0.9263)">109.5 %</div>
<div class="t" style="left:1204.81px;top:784.50px;font-size:15.0px;color:#f2f2f2;transform:scaleX(0.9263)">11359.7 Gals</div>
<div class="t" style="left:38.19px;top:824.50px;font-size:15.0px;color:#f2f2f2;transform:scaleX(0.9263)">1001</div>
<div class="t" style="left:139.54px;top:824.50px;font-size:15.0px;color:#f2f2f2;transform:scaleX(0.9263)">06/15/2013 09:48:07</div>
<div class="t" style="left:359.26px;top:824.50px;font-size:15.0px;color:#f2f2f2;transform:scaleX(0.9263)">06/15/2013 09:50:50</div>
<div class="t" style="left:578.79px;top:824.50px;font-size:15.0px;color:#f2f2f2;transform:scaleX(0.9263)">06/15/2013 10:12:16</div>
<div class="t" style="left:805.58px;top:824.50px;font-size:15.0px;color:#f2f2f2;transform:scaleX(0.9263)">35.1 °C</div>
<div class="t" style="left:928.65px;top:824.50px;font-size:15.0px;color:#f2f2f2;transform:scaleX(0.9263)">806.38 Kg/m3</div>
<div class="t" style="left:1077.55px;top:824.50px;font-size:15.0px;color:#f2f2f2;transform:scaleX(0.9263)">109.5 %</div>
<div class="t" style="left:1204.29px;top:824.50px;font-size:15.0px;color:#f2f2f2;transform:scaleX(0.9263)">18381.6 Gals</div>
<div class="t" style="left:1431.72px;top:824.50px;font-size:15.0px;color:#f2f2f2;transform:scaleX(0.9263)">panuco</div>
<div class="t" style="left:50.24px;top:864.50px;font-size:15.0px;color:#f2f2f2;transform:scaleX(0.9263)">0</div>
<div class="t" style="left:139.54px;top:864.50px;font-size:15.0px;color:#f2f2f2;transform:scaleX(0.9263)">06/15/2013 09:35:18</div>
<div class="t" style="left:359.26px;top:864.50px;font-size:15.0px;color:#f2f2f2;transform:scaleX(0.9263)">06/15/2013 09:35:18</div>
<div class="t" style="left:578.79px;top:864.50px;font-size:15.0px;color:#f2f2f2;transform:scaleX(0.9263)">06/15/2013 09:41:16</div>
<div class="t" style="left:805.58px;top:864.50px;font-size:15.0px;color:#f2f2f2;transform:scaleX(0.9263)">32.3 °C</div>
<div class="t" style="left:928.65px;top:864.50px;font-size:15.0px;color:#f2f2f2;transform:scaleX(0.9263)">808.44 Kg/m3</div>
<div class="t" style="left:1085.74px;top:864.50px;font-size:15.0px;color:#f2f2f2;transform:scaleX(0.9263)">0.0 %</div>
<div class="t" style="left:1204.75px;top:864.50px;font-size:15.0px;color:#f2f2f2;transform:scaleX(0.9263)">21953.2 Gals</div>
<div id="frame"></div>
</body></html>
